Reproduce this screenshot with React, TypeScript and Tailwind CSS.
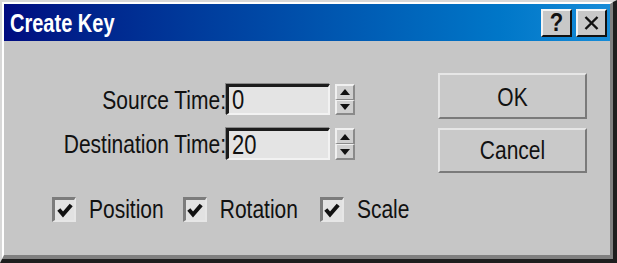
import React from "react";

const font = { fontFamily: '"Liberation Sans", Arial, sans-serif' };

function Spinner() {
  return (
    <div className="ml-[5px] flex h-full w-[20px] flex-col">
      <div className="flex flex-1 items-center justify-center border-t-2 border-l-2 border-b border-r-2 border-t-[#f0f0f0] border-l-[#f0f0f0] border-b-[#8a8a8a] border-r-[#8a8a8a] bg-[#cfcfcf]">
        <svg width="10" height="6" viewBox="0 0 10 6"><polygon points="5,0 10,6 0,6" fill="#111" /></svg>
      </div>
      <div className="flex flex-1 items-center justify-center border-t border-l-2 border-b-2 border-r-2 border-t-[#f0f0f0] border-l-[#f0f0f0] border-b-[#8a8a8a] border-r-[#8a8a8a] bg-[#cfcfcf]">
        <svg width="10" height="6" viewBox="0 0 10 6"><polygon points="0,0 10,0 5,6" fill="#111" /></svg>
      </div>
    </div>
  );
}

function Field({ label, value, h }: { label: string; value: string; h: string }) {
  return (
    <div className={`flex items-stretch ${h}`}>
      <div className="flex w-[222px] items-center justify-end">
        <span className="inline-block origin-center scale-y-120 text-[21px] leading-none text-[#111]">{label}</span>
      </div>
      <div className="flex w-[104px] items-center border-t-[3px] border-l-[3px] border-b-2 border-r-2 border-t-[#1c1c1c] border-l-[#1c1c1c] border-b-[#f2f2f2] border-r-[#f2f2f2] bg-[#e4e4e4] pl-[3px] shadow-[-1px_-1px_0_#8a8a8a]">
        <span className="inline-block origin-center scale-y-125 text-[22px] leading-none text-[#111]">{value}</span>
      </div>
      <Spinner />
    </div>
  );
}

function Check({ label }: { label: string }) {
  return (
    <div className="flex items-center">
      <div className="flex h-[25px] w-[24px] items-center justify-center border-t-[3px] border-l-[3px] border-b-2 border-r-2 border-t-[#7c7c7c] border-l-[#7c7c7c] border-b-[#e6e6e6] border-r-[#e6e6e6] bg-[#e2e2e2]">
        <svg width="16" height="15" viewBox="0 0 16 15">
          <polyline points="1.8,6.5 6,11.5 14.2,2" fill="none" stroke="#111" strokeWidth="4" />
        </svg>
      </div>
      <span className="ml-[13px] inline-block origin-center scale-y-120 text-[21px] leading-none text-[#111]">{label}</span>
    </div>
  );
}

function TitleBtn({ children }: { children: React.ReactNode }) {
  return (
    <div className="flex h-[28px] w-[31px] items-center justify-center border-t-2 border-l-2 border-b-2 border-r-2 border-t-[#f4f4f4] border-l-[#f4f4f4] border-b-[#111] border-r-[#111] bg-[#c8c8c8]">
      {children}
    </div>
  );
}

function Btn({ label, h }: { label: string; h: string }) {
  return (
    <div className={`flex ${h} w-[149px] items-center justify-center border-t-2 border-l-2 border-b-2 border-r-2 border-t-[#e6e6e6] border-l-[#e6e6e6] border-b-[#7a7a7a] border-r-[#7a7a7a] bg-[#c9c9c9]`}>
      <span className="inline-block origin-center scale-y-120 text-[21px] leading-none text-[#111]">{label}</span>
    </div>
  );
}

export default function App() {
  return (
    <div style={font} className="h-[263px] w-[617px] border-t-2 border-l-2 border-r-4 border-b-4 border-t-[#d8d8d8] border-l-[#d8d8d8] border-r-[#1e1e1e] border-b-[#1e1e1e] bg-[#c6c6c6]">
      <div className="flex h-full w-full flex-col border-t-2 border-l-2 border-r-3 border-b-4 border-t-white border-l-white border-r-[#808080] border-b-[#808080]">
        <div className="flex h-[37px] items-center bg-linear-to-r from-[#000a80] to-[#168cd8] pl-[6px] pr-[3px]">
          <span className="inline-block origin-center scale-y-130 text-[20px] font-bold leading-none text-white">Create Key</span>
          <div className="ml-auto flex gap-[4px]">
            <TitleBtn>
              <span className="inline-block origin-center scale-y-120 text-[22px] font-bold leading-none text-[#111]">?</span>
            </TitleBtn>
            <TitleBtn>
              <svg width="15" height="14" viewBox="0 0 15 14">
                <path d="M1.5 1 L13.5 13 M13.5 1 L1.5 13" stroke="#111" strokeWidth="2.4" />
              </svg>
            </TitleBtn>
          </div>
        </div>
        <div className="flex flex-1">
          <div className="flex w-[434px] flex-col pt-[43px]">
            <Field label="Source Time:" value="0" h="h-[31px]" />
            <div className="h-[13px]" />
            <Field label="Destination Time:" value="20" h="h-[32px]" />
            <div className="mt-[37px] flex items-center pl-[48px]">
              <Check label="Position" />
              <div className="w-[19px]" />
              <Check label="Rotation" />
              <div className="w-[22px]" />
              <Check label="Scale" />
            </div>
          </div>
          <div className="flex flex-col pt-[32px]">
            <Btn label="OK" h="h-[46px]" />
            <div className="h-[9px]" />
            <Btn label="Cancel" h="h-[45px]" />
          </div>
        </div>
      </div>
    </div>
  );
}
